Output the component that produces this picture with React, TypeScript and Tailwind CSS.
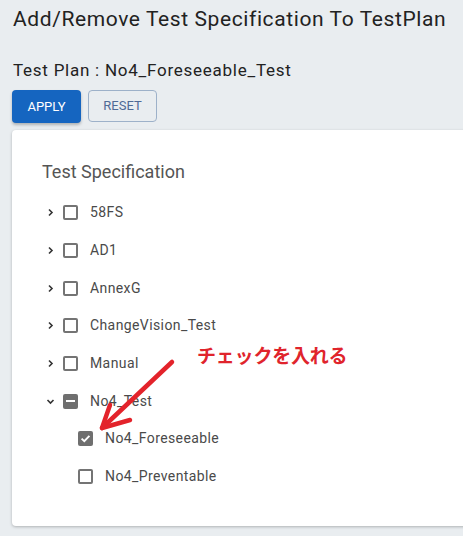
import React from 'react';

type Node = { name: string; state: 'none' | 'checked' | 'partial'; open?: boolean; children?: Node[] };

const tree: Node[] = [
  { name: '58FS', state: 'none' },
  { name: 'AD1', state: 'none' },
  { name: 'AnnexG', state: 'none' },
  { name: 'ChangeVision_Test', state: 'none' },
  { name: 'Manual', state: 'none' },
  {
    name: 'No4_Test',
    state: 'partial',
    open: true,
    children: [
      { name: 'No4_Foreseeable', state: 'checked' },
      { name: 'No4_Preventable', state: 'none' },
    ],
  },
];

function Box({ state }: { state: Node['state'] }) {
  if (state === 'none') {
    return <div className="w-[15px] h-[15px] rounded-[2px] border-2 border-[#747474] bg-white shrink-0" />;
  }
  return (
    <div className="w-[15px] h-[15px] rounded-[2px] bg-[#6f6f6f] shrink-0 flex items-center justify-center">
      {state === 'checked' ? (
        <svg width="11" height="11" viewBox="0 0 11 11">
          <path d="M1.6 5.6 L4.3 8.2 L9.4 2.8" stroke="#fff" strokeWidth="1.9" fill="none" />
        </svg>
      ) : (
        <div className="w-[9px] h-[2px] bg-white" />
      )}
    </div>
  );
}

function Chevron({ open }: { open?: boolean }) {
  return (
    <div className="w-[16px] flex justify-center shrink-0">
      <svg width="9" height="9" viewBox="0 0 9 9">
        {open ? (
          <path d="M1.5 3 L4.5 6 L7.5 3" stroke="#333" strokeWidth="1.6" fill="none" />
        ) : (
          <path d="M3 1.5 L6 4.5 L3 7.5" stroke="#333" strokeWidth="1.6" fill="none" />
        )}
      </svg>
    </div>
  );
}

function Row({ node, child }: { node: Node; child?: boolean }) {
  return (
    <div className={`h-[37.7px] flex items-center ${child ? 'pl-[36px]' : ''}`}>
      {!child && <Chevron open={node.open} />}
      <div className={child ? '' : 'ml-[5px]'}>
        <Box state={node.state} />
      </div>
      <span className="ml-[12px] text-[14px] tracking-[0.4px] text-[#4a4a4a]">{node.name}</span>
    </div>
  );
}

export default function App() {
  return (
    <div className="w-[463px] h-[536px] overflow-hidden bg-[#e9edf0] font-['Roboto','Noto_Sans',sans-serif]">
      <h1 className="pl-[13px] pt-[5px] text-[21px] leading-[28px] tracking-[0.6px] text-[#222]">
        Add/Remove Test Specification To TestPlan
      </h1>
      <p className="pl-[13px] mt-[25px] text-[17px] leading-[24px] tracking-[0.75px] text-[#222]">
        Test Plan : No4_Foreseeable_Test
      </p>

      <div className="flex gap-[7px] pl-[12px] mt-[8px]">
        <button className="w-[69px] h-[33px] rounded-[4px] bg-[#1565c0] text-white text-[13px] shadow-[0_2px_3px_rgba(0,0,0,0.25)]">
          APPLY
        </button>
        <button className="w-[69px] h-[32px] rounded-[4px] border border-[#9db1c9] text-[#4f6a96] text-[13px]">
          RESET
        </button>
      </div>

      <div className="relative ml-[12px] mt-[7px] w-[470px] h-[396px] bg-white rounded-[4px] shadow-[0_1px_3px_rgba(0,0,0,0.25)] pl-[30px] pt-[30px]">
        <h2 className="text-[18px] leading-[24px] text-[#555]">Test Specification</h2>
        <div className="mt-[10px]">
          {tree.map((n) => (
            <React.Fragment key={n.name}>
              <Row node={n} />
              {n.open && n.children?.map((c) => <Row key={c.name} node={c} child />)}
            </React.Fragment>
          ))}
        </div>

        <span className="absolute left-[185px] top-[213px] text-[19px] leading-[24px] font-bold tracking-[-0.2px] text-[#e0242c] font-['Noto_Sans_CJK_JP',sans-serif]">
          チェックを入れる
        </span>
        <svg className="absolute left-0 top-0 pointer-events-none" width="200" height="320" viewBox="0 0 200 320">
          <g stroke="#e3232b" strokeWidth="4.5" strokeLinecap="round" fill="none">
            <path d="M160 232 L90 298" />
            <path d="M98 275 L90 298 L118 290" strokeLinejoin="round" />
          </g>
        </svg>
      </div>
    </div>
  );
}
